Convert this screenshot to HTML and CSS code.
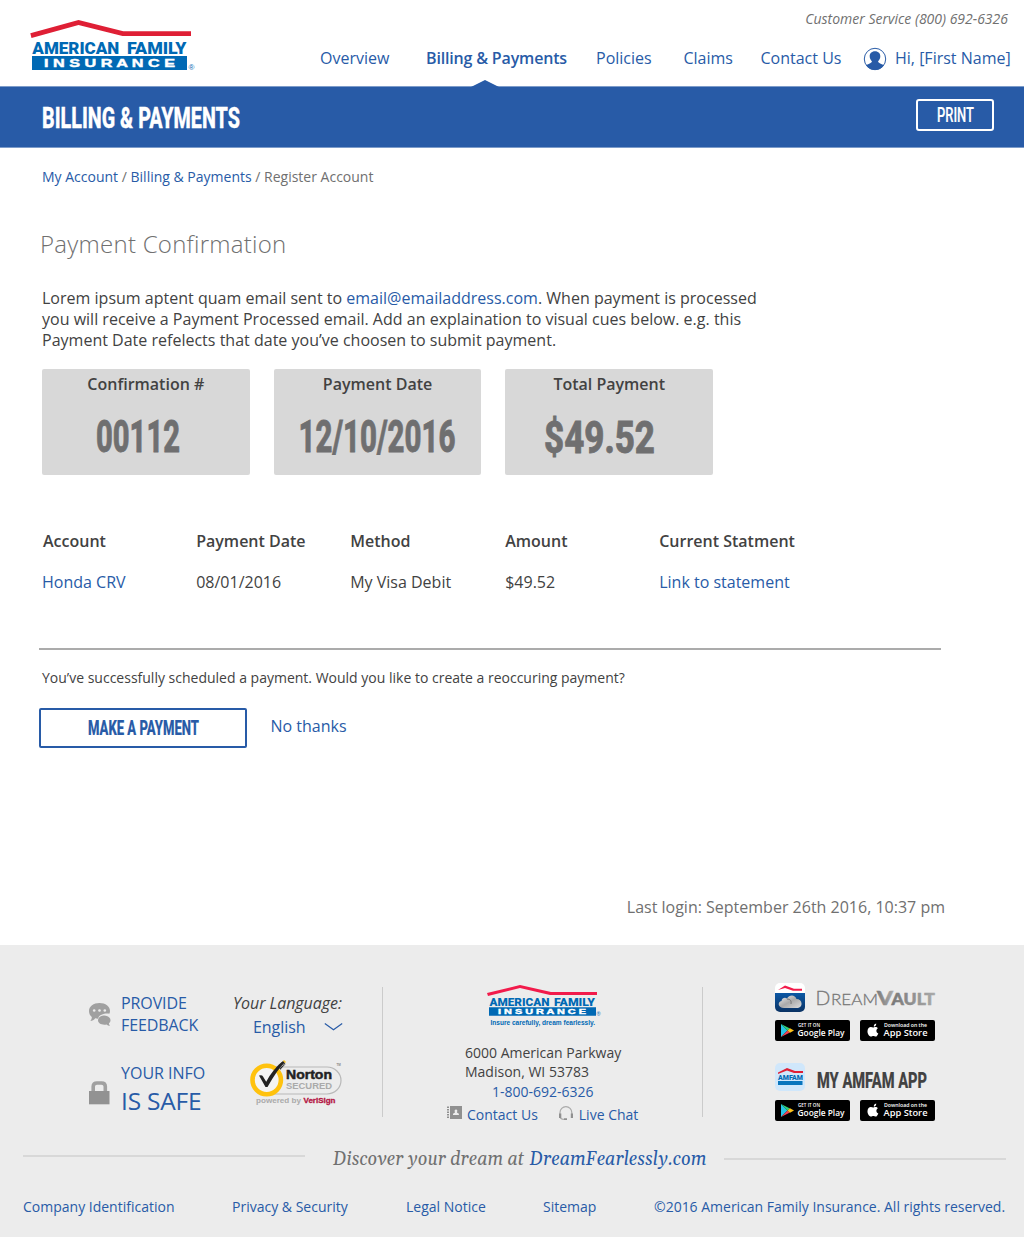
FILE: index.html
```html
<!DOCTYPE html>
<html lang="en">
<head>
<meta charset="utf-8">
<title>Billing &amp; Payments</title>
<link rel="stylesheet" href="styles.css">
</head>
<body>
<header class="header">
  <a class="brand"><svg width="166" height="51">
    <path class="roof" d="M.3 13.300 48.500 0 93.300 11.200H161v4.700H92.500L48.500 4.900 1.500 18z"/>
    <text class="logo-text" x="2.300" y="33.500" font-size="17" textLength="87" lengthAdjust="spacingAndGlyphs">AMERICAN</text>
    <text class="logo-text" x="97" y="33.500" font-size="17" textLength="59.500" lengthAdjust="spacingAndGlyphs">FAMILY</text>
    <path fill="#0069b4" d="M2 36h155v14H2z"/>
    <text class="logo-sub" x="14" y="47" font-size="10.500" textLength="131" lengthAdjust="spacingAndGlyphs">I N S U R A N C E</text>
    <text x="158.500" y="49.500" font-size="8" fill="#0069b4" font-family="Liberation Sans, sans-serif">®</text>
  </svg></a>
  <div class="header-main">
    <p class="service">Customer Service (800) 692-6326</p>
    <nav class="nav">
      <a>Overview</a><a class="active">Billing &amp; Payments</a><a>Policies</a><a>Claims</a><a>Contact Us</a>
      <a class="user"><svg width="24" height="24" viewBox="0 0 24 24"><circle cx="12" cy="12" r="10.700" fill="#fff" stroke="#285ba7"/><path fill="#285ba7" d="M12 4.200c3.400 0 5.500 2.300 5.300 5.400-.1 2-.9 3.400-2.200 4.600 0 1.600 1.600 1.700 5.800 4.100C19 21.200 16 23 12 23s-7-1.800-8.900-4.700c4.200-2.400 5.800-2.500 5.800-4.100-1.300-1.200-2.100-2.600-2.200-4.600C6.500 6.500 8.600 4.200 12 4.200z"/></svg><span>Hi, [First Name]</span></a>
    </nav>
  </div>
</header>

<div class="banner">
  <svg class="pointer" width="28" height="8"><path d="M0 7 14 0l14 7v1H0z" fill="#285ba7"/></svg>
  <svg class="cond title" width="198" height="30"><text x="0" y="25" font-size="29" textLength="198" lengthAdjust="spacingAndGlyphs">BILLING &amp; PAYMENTS</text></svg>
  <a class="print"><svg class="cond regular" width="37" height="20"><text x="0" y="17" font-size="19.500" textLength="37" lengthAdjust="spacingAndGlyphs">PRINT</text></svg></a>
</div>

<main class="main">
  <p class="crumbs"><a>My Account</a> / <a>Billing &amp; Payments</a> / Register Account</p>
  <h1>Payment Confirmation</h1>
  <p class="intro">Lorem ipsum aptent quam email sent to <a>email@emailaddress.com</a>. When payment is processed<br>you will receive a Payment Processed email. Add an explaination to visual cues below. e.g. this<br>Payment Date refelects that date you’ve choosen to submit payment.</p>
  <section class="cards">
    <div class="card"><h2>Confirmation #</h2><svg class="cond number" width="208" height="60"><text x="54" y="36.800" font-size="44.500" textLength="84" lengthAdjust="spacingAndGlyphs">00112</text></svg></div>
    <div class="card"><h2>Payment Date</h2><svg class="cond number" width="208" height="60"><text x="24.500" y="36.800" font-size="44.500" textLength="157" lengthAdjust="spacingAndGlyphs">12/10/2016</text></svg></div>
    <div class="card"><h2>Total Payment</h2><svg class="cond number" width="208" height="60"><text x="39" y="37.800" font-size="44.500" textLength="111" lengthAdjust="spacingAndGlyphs">$49.52</text></svg></div>
  </section>
  <section class="table">
    <b class="first">Account</b><b>Payment Date</b><b>Method</b><b>Amount</b><b>Current Statment</b>
    <a>Honda CRV</a><span>08/01/2016</span><span>My Visa Debit</span><span>$49.52</span><a>Link to statement</a>
  </section>
  <hr>
  <p class="question">You’ve successfully scheduled a payment. Would you like to create a reoccuring payment?</p>
  <div class="actions">
    <a class="make"><svg class="cond" width="111" height="20"><text x="0" y="17" font-size="19.500" textLength="111" lengthAdjust="spacingAndGlyphs">MAKE A PAYMENT</text></svg></a>
    <a class="decline">No thanks</a>
  </div>
  <p class="login">Last login: September 26th 2016, 10:37 pm</p>
</main>

<footer class="footer">
  <svg class="defs" aria-hidden="true"><defs>
    <linearGradient id="navy" x1="0" y1="0" x2="0" y2="1"><stop offset="0" stop-color="#0b58a5"/><stop offset="1" stop-color="#0a3263"/></linearGradient>
    <linearGradient id="silver" x1="0" y1="0" x2="1" y2="1"><stop offset="0" stop-color="#eee"/><stop offset=".5" stop-color="#aaa"/><stop offset="1" stop-color="#ddd"/></linearGradient>
    <linearGradient id="vault" x1="0" y1="0" x2="1" y2="0"><stop offset="0" stop-color="#777"/><stop offset="1" stop-color="#aaa"/></linearGradient>
    <g id="play"><rect width="75" height="21" rx="2" fill="#000"/><path fill="#27c5e8" d="M6 4v13l6.500-6.500z"/><path fill="#2fd078" d="M6 4l6.500 6.500 2.500-2z"/><path fill="#f43e51" d="M6 17l6.500-6.500 2.500 2z"/><path fill="#ffc21a" d="M15 8.300l4 2.200-4 2.300-2.500-2.300z"/></g>
    <g id="apple"><rect width="75" height="21" rx="2" fill="#000"/><path fill="#fff" d="M13.800 6.600c-.2-1.600.9-2.900 2.400-3.200.2 1.600-.9 3.100-2.400 3.200zM13 7.500c.8 0 1.400-.6 2.500-.6 1 0 1.900.5 2.400 1.300-2.200 1.300-1.900 4.300.4 5.200-.5 1.300-1.500 3.200-2.700 3.200-.9 0-1.200-.5-2.200-.5-1.100 0-1.400.5-2.200.5C9 16.600 7.300 13.500 7.500 11c.2-2.400 1.600-3.900 3.400-3.900.9 0 1.400.4 2.100.4z"/></g>
  </defs></svg>
  <div class="columns">
    <section class="support">
      <svg class="chat" width="22" height="24" viewBox="0 0 22 24"><path fill="#a0a0a0" d="M10.500 0C16.500 0 21 3.400 21 8c0 1-.2 1.900-.7 2.700-5.400-.7-10.500 1.300-11.300 5l-2.800-.5C5 17 3.300 18 1.300 18c1-.9 1.600-2.300 1.500-4C1 12.500 0 10.500 0 8c0-4.600 4.500-8 10.500-8z"/><path fill="#a0a0a0" d="M15 12.500c3.600 0 6.500 2 6.500 4.700 0 1.300-.6 2.300-1.600 3.100 0 1 .4 1.800 1.100 2.500-1.400 0-2.600-.6-3.500-1.300-4.800.8-8.500-1.200-8.500-4.200 0-2.700 2.700-4.800 6-4.800z"/><g fill="#ececec"><circle cx="5.200" cy="7.500" r="1.300"/><circle cx="10.500" cy="7.500" r="1.300"/><circle cx="15.800" cy="7.500" r="1.300"/></g></svg>
      <a class="feedback">PROVIDE<br>FEEDBACK</a>
      <div class="language"><em>Your Language:</em><a>English <svg width="19" height="8"><path d="M.8.500 9.500 6.800 18.200.500" fill="none" stroke="#285ba7" stroke-width="1.200"/></svg></a></div>
      <svg class="lock" width="21" height="24"><path d="M4.200 11V5.500Q4.200 2 8 2h4.500Q16.300 2 16.300 5.500V11" fill="none" stroke="#a0a0a0" stroke-width="3.600"/><path fill="#929292" d="M0 10h20.500v13.300H0z"/></svg>
      <a class="safe">YOUR INFO<span>IS SAFE</span></a>
      <svg class="norton" width="93" height="47" viewBox="0 0 93 47">
        <path d="M24 7h53a14 13.500 0 0 1 0 27H24" fill="#ececec" stroke="#b8b8b8" stroke-width="1.200"/>
        <circle cx="16.700" cy="20" r="14.200" fill="#f4f4f4" stroke="#ffc20e" stroke-width="4.600"/>
        <path d="M9 15.500q3-1 4 1l3.200 5.200Q23 9 33 1l2 1q-8 8-17.500 25h-2L9 15.500z" fill="#222"/><path d="M27 8l5-5M30 9l5-6" stroke="#222" stroke-width="2" stroke-dasharray="1 .6"/><path d="M33 1h2v2" stroke="#ffc20e" fill="none"/>
        <g class="norton-text"><text x="36" y="19" font-size="13.500" fill="#222" stroke="#222" stroke-width=".5" textLength="46" lengthAdjust="spacingAndGlyphs">Norton</text><text x="36" y="29.300" font-size="8.500" fill="#aaa" textLength="46" lengthAdjust="spacingAndGlyphs">SECURED</text><text x="86.500" y="6" font-size="3" fill="#888">TM</text><text x="6" y="43" font-size="7.500" fill="#aaa" textLength="45" lengthAdjust="spacingAndGlyphs">powered by</text><text x="53.500" y="43" font-size="7.500" fill="#b41543" stroke="#b41543" stroke-width=".3" textLength="32" lengthAdjust="spacingAndGlyphs">VeriSign</text></g>
      </svg>
    </section>

    <section class="address">
      <svg class="footer-logo" width="114" height="42">
        <path class="roof" d="M0 8 33 0l31 7h46v2.900H63L33 3 1 11z"/>
        <text class="logo-text" x="2.500" y="20.500" font-size="11" textLength="60" lengthAdjust="spacingAndGlyphs">AMERICAN</text>
        <text class="logo-text" x="67" y="20.500" font-size="11" textLength="41" lengthAdjust="spacingAndGlyphs">FAMILY</text>
        <path fill="#0069b4" d="M2 22.300h107v8.400H2z"/>
        <text class="logo-sub" x="11" y="29.100" font-size="7" textLength="88" lengthAdjust="spacingAndGlyphs">I N S U R A N C E</text>
        <text x="109.500" y="31" font-size="5.500" fill="#0069b4" font-family="Liberation Sans, sans-serif">®</text>
        <text class="tagline" x="3.500" y="40" font-size="7.600" textLength="104.500" lengthAdjust="spacingAndGlyphs">Insure carefully, dream fearlessly.</text>
      </svg>
      <p>6000 American Parkway<br>Madison, WI 53783</p>
      <a class="phone">1-800-692-6326</a>
      <div class="contacts">
        <a><svg width="15" height="13"><path fill="#909090" d="M3 0h12v13H3z"/><path d="M1 .5v12.500" stroke="#909090" stroke-width="2" stroke-dasharray="1.500 1"/><path fill="#ececec" d="M9 3.500c1.400 0 1.600 1.300.9 3l2 1.200v1.300H6V7.700l2-1.200c-.7-1.700-.4-3 1-3z"/></svg>Contact Us</a>
        <a><svg width="16" height="15"><path d="M2 8V6.500a5.900 5.900 0 0 1 11.800 0V8M2.300 12q1.500 1.500 4.500 1.500" fill="none" stroke="#aaa" stroke-width="1.200"/><path fill="#909090" d="M1 7.500h2.300V12H1zm11.800 0H15V12h-2.200zM6 12.300h3V14H6z"/></svg>Live Chat</a>
      </div>
    </section>

    <section class="apps">
      <div class="app">
        <svg width="30" height="29"><rect width="30" height="29" rx="5" fill="#fff"/><path d="M0 10h30v14a5 5 0 0 1-5 5H5a5 5 0 0 1-5-5z" fill="url(#navy)"/><path class="roof bright" d="M3 7l7-4.500 9 3.300h8v2h-9l-8-2.800z"/><path fill="url(#silver)" d="M9 25c-6 0-7-6-2.500-7 .5-3 3.500-4 5.500-2.500 2-4 8-4.500 9.500.5 6 0 7 8 1.500 9z"/><path d="M12 16q5 0 4 5" stroke="#777" fill="none"/></svg>
        <svg width="119" height="20"><g class="vault-light"><text x="-.5" y="17" font-size="19.500">D</text><text x="15" y="17" font-size="16" textLength="47" lengthAdjust="spacingAndGlyphs">REAM</text></g><g class="vault-heavy"><text x="61" y="17" font-size="19.500" textLength="16" lengthAdjust="spacingAndGlyphs">V</text><text x="75.500" y="17" font-size="16" textLength="43.500" lengthAdjust="spacingAndGlyphs">AULT</text></g></svg>
      </div>
      <div class="stores">
        <svg class="badge" width="75" height="21"><use href="#play"/><text x="23" y="6.600" font-size="4.500" textLength="22" lengthAdjust="spacingAndGlyphs">GET IT ON</text><text x="22.500" y="15.600" font-size="9" textLength="47" lengthAdjust="spacingAndGlyphs">Google Play</text></svg>
        <svg class="badge" width="75" height="21"><use href="#apple"/><text x="24" y="6.600" font-size="4.500" textLength="43" lengthAdjust="spacingAndGlyphs">Download on the</text><text x="23.500" y="16.300" font-size="9.500" textLength="44" lengthAdjust="spacingAndGlyphs">App Store</text></svg>
      </div>
      <div class="app second">
        <svg width="30" height="28"><rect width="30" height="28" rx="5" fill="#d0e7fb"/><path class="roof" d="M3 9.500 12 5l8 3h8v2h-9l-7-2.500-9 3.500z"/><text class="logo-text" x="3" y="16.700" font-size="7.500" textLength="25" lengthAdjust="spacingAndGlyphs">AMFAM</text><path d="M3 18h24.500v4H3z" fill="#0875bd"/></svg>
        <svg class="cond appname" width="110" height="24"><text x="0" y="22.500" font-size="21.500" textLength="110" lengthAdjust="spacingAndGlyphs">MY AMFAM APP</text></svg>
      </div>
      <div class="stores">
        <svg class="badge" width="75" height="21"><use href="#play"/><text x="23" y="6.600" font-size="4.500" textLength="22" lengthAdjust="spacingAndGlyphs">GET IT ON</text><text x="22.500" y="15.600" font-size="9" textLength="47" lengthAdjust="spacingAndGlyphs">Google Play</text></svg>
        <svg class="badge" width="75" height="21"><use href="#apple"/><text x="24" y="6.600" font-size="4.500" textLength="43" lengthAdjust="spacingAndGlyphs">Download on the</text><text x="23.500" y="16.300" font-size="9.500" textLength="44" lengthAdjust="spacingAndGlyphs">App Store</text></svg>
      </div>
    </section>
  </div>
  <div class="discover">
    <i></i>
    <svg class="slogan" width="376" height="26"><text x="1" y="19" fill="#707070" textLength="191" lengthAdjust="spacingAndGlyphs">Discover your dream at</text><text x="197.500" y="19" fill="#285ba7" textLength="177" lengthAdjust="spacingAndGlyphs">DreamFearlessly.com</text></svg>
    <i class="right"></i>
  </div>
  <nav class="legal"><a>Company Identification</a><a>Privacy &amp; Security</a><a>Legal Notice</a><a>Sitemap</a><a>©2016 American Family Insurance. All rights reserved.</a></nav>
</footer>
</body>
</html>
```
FILE: styles.css
```css
* { box-sizing: border-box; }
body { margin: 0; background: #fff; color: #424242; font: 16px/22px "Open Sans", sans-serif; }
p, h1, h2 { margin: 0; }
a { color: #285ba7; text-decoration: none; white-space: nowrap; }
svg { display: block; overflow: visible; flex-shrink: 0; }
.defs { position: absolute; width: 0; height: 0; }
.roof { fill: #df1f35; }
.logo-text { fill: #0069b4; font-family: Roboto, sans-serif; font-weight: 900; }
.logo-sub { fill: #fff; stroke: #fff; stroke-width: .4; font-family: "Liberation Sans", sans-serif; font-weight: 700; }
.tagline { fill: #0069b4; font-family: "Liberation Sans", sans-serif; font-weight: 700; }
.cond { font-family: Roboto, sans-serif; font-weight: 800; fill: currentColor; stroke: currentColor; stroke-width: .2; }
.cond.title { stroke-width: .3; margin-top: 1px; }
.cond.number { stroke-width: .8; }
.cond.regular { font-weight: 500; stroke-width: .2; }

.header { display: flex; height: 87px; padding-left: 30px; }
.brand { width: 290px; padding-top: 20px; }
.header-main { flex: 1; padding-top: 8px; }
.service { padding-right: 16px; text-align: right; font-size: 14px; font-style: italic; color: #707070; }
.nav { display: grid; grid-template-columns: 106px 170px 87.500px 77px 102.500px 1fr; height: 39px; padding-top: 17px; }
.active { font-weight: 600; letter-spacing: -.17px; }
.user { display: flex; align-items: center; gap: 8px; height: 24px; }
.user span { margin-top: -2px; }

.banner { position: relative; display: flex; align-items: center; justify-content: space-between; height: 60px; padding: 0 30px 0 42px; background: #285ba7; color: #fff; box-shadow: 0 0 0 .6px #285ba7; }
.pointer { position: absolute; left: 471px; top: -7px; }
.print { display: flex; align-items: center; justify-content: center; width: 78px; height: 32px; margin-bottom: 4px; border: 2px solid #fff; border-radius: 3px; color: #fff; }

.main { height: 798px; padding: 19px 79px 0 42px; }
.crumbs { font-size: 14px; color: #707070; }
h1 { margin: 40px 0 0 -2px; font-size: 24px; line-height: 32px; font-weight: 300; letter-spacing: .26px; color: #707070; }
.intro { margin-top: 28px; line-height: 21px; letter-spacing: .01px; }
.cards { display: flex; gap: 24px; margin-top: 18px; }
.card { width: 207.700px; height: 106px; padding-top: 4px; border-radius: 2px; background: #d8d8d8; color: #6f6f70; }
.card h2 { height: 42px; color: #424242; font-size: 16px; line-height: 22px; font-weight: 600; text-align: center; }
.table { display: grid; grid-template-columns: 154.200px 154px 155px 154px 1fr; row-gap: 19px; margin-top: 55px; }
.table b { font-weight: 600; }
.table .first { padding-left: 1px; }
hr { width: 902px; height: 2px; margin: 55px 0 0 -3px; border: 0; background: #ababab; }
.question { margin-top: 17px; font-size: 14px; }
.actions { display: flex; gap: 23.500px; margin: 19px 0 0 -3px; }
.make { display: flex; align-items: center; justify-content: center; width: 208px; height: 40px; border: 2px solid #285ba7; border-radius: 2px; }
.decline { padding-top: 7px; }
.login { margin-top: 148px; text-align: right; color: #707070; }

.footer { height: 292px; padding-top: 42px; background: #ececec; }
.columns { display: grid; grid-template-columns: 383px 320px 1fr; grid-template-rows: 130px; height: 130px; }
.support { display: grid; grid-template-columns: 32px 112px 109px; grid-template-rows: 70px 60px; padding-left: 89px; border-right: 1px solid #cbcbcb; }
.chat { margin-top: 16px; }
.feedback { padding-top: 5px; letter-spacing: -.1px; }
.language { display: flex; flex-direction: column; padding-top: 4px; line-height: 24px; letter-spacing: -.05px; white-space: nowrap; }
.language a { display: flex; align-items: center; gap: 18px; padding-left: 20px; }
.lock { margin-top: 24px; }
.safe { padding-top: 5px; }
.safe span { display: block; font-size: 24.500px; line-height: 33px; letter-spacing: -.2px; }
.norton { margin: 3px 0 0 17px; }
.norton-text { font-family: "Liberation Sans", sans-serif; font-weight: 700; }
.address { padding-left: 82px; border-right: 1px solid #cbcbcb; font-size: 14px; line-height: 19px; }
.footer-logo { margin: -2px 0 0 22px; }
.footer-logo .roof, .roof.bright { fill: #f21b4b; }
.address p { margin-top: 16px; }
.phone { display: block; margin-left: 27px; line-height: 21px; }
.contacts { display: flex; gap: 20px; margin: 2px 0 0 -18px; }
.contacts a { display: flex; gap: 5px; line-height: 22px; }
.contacts svg { margin-top: 2px; }
.apps { padding: 0 0 0 72px; margin-top: -4px; }
.app { display: flex; align-items: center; gap: 11px; height: 29px; }
.vault-light { fill: #777; font-family: Lato, sans-serif; font-weight: 300; stroke: #777; stroke-width: .3; }
.vault-heavy { fill: url(#vault); font-family: Lato, sans-serif; font-weight: 900; stroke: url(#vault); stroke-width: .5; }
.stores { display: flex; gap: 10px; margin-top: 8px; }
.badge text { fill: #fff; font-family: "Open Sans", sans-serif; font-weight: 600; }
.app.second { gap: 12px; height: 28px; margin-top: 22px; }
.app.second + .stores { margin-top: 9px; }
.discover { display: flex; height: 66px; padding: 28px 18px 0 23px; }
.discover i { width: 282px; height: 2px; margin: 10px 27px 0 0; background: #d8d8d8; }
.discover i.right { margin: 13px 0 0 16px; }
.slogan { margin-top: 1px; font-family: Gelasio, Georgia, "Liberation Serif", serif; font-size: 19.500px; font-style: italic; }
.legal { display: grid; grid-template-columns: 209px 174px 137px 111px 1fr; padding: 13px 0 0 23px; font-size: 14px; }
.legal a:last-child { letter-spacing: -.01px; }
```
